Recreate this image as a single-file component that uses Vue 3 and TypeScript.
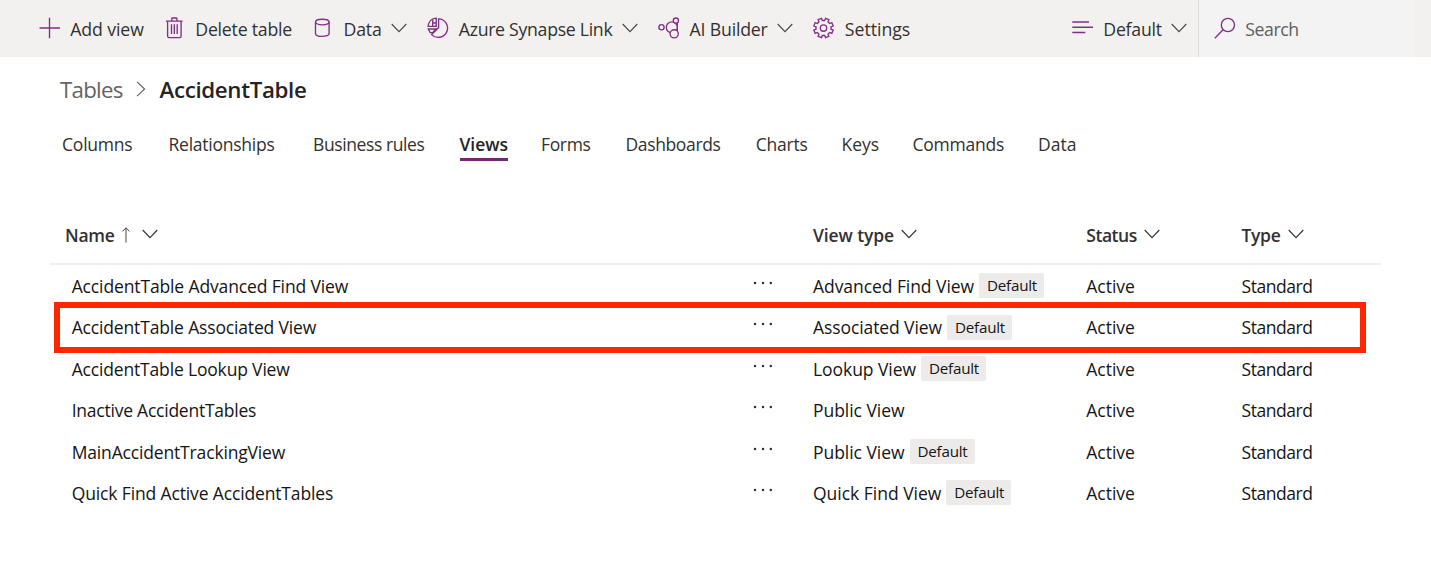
<script setup lang="ts">
import type { Directive } from 'vue'

interface Command {
  icon: string
  label: string
  width: number
  menu?: boolean
}
interface Tab {
  label: string
  width: number
  active?: boolean
}
interface Row {
  name: string
  nameWidth: number
  viewType: string
  typeWidth: number
  isDefault?: boolean
  highlighted?: boolean
}

// Spreads a label's tracking so that it takes exactly the given advance width.
const vFit: Directive<HTMLElement, number> = {
  mounted(el, { value }) {
    const natural = el.getBoundingClientRect().width
    const count = (el.textContent ?? '').length
    if (count > 0) el.style.letterSpacing = `${(value - natural) / count}px`
  },
}

const commands: Command[] = [
  { icon: 'add', label: 'Add view', width: 73.5 },
  { icon: 'trash', label: 'Delete table', width: 96.8 },
  { icon: 'db', label: 'Data', width: 38 },
  { icon: 'pie', label: 'Azure Synapse Link', width: 153.7 },
  { icon: 'ai', label: 'AI Builder', width: 78 },
  { icon: 'gear', label: 'Settings', width: 65.5 },
].map((c) => ({ ...c, menu: ['db', 'pie', 'ai'].includes(c.icon) }))

const tabs: Tab[] = [
  { label: 'Columns', width: 70.5 },
  { label: 'Relationships', width: 106 },
  { label: 'Business rules', width: 111.5 },
  { label: 'Views', width: 48.5, active: true },
  { label: 'Forms', width: 49.5 },
  { label: 'Dashboards', width: 95 },
  { label: 'Charts', width: 52 },
  { label: 'Keys', width: 37.5 },
  { label: 'Commands', width: 91.5 },
  { label: 'Data', width: 38.5 },
]

const rows: Row[] = [
  { name: 'AccidentTable Advanced Find View', nameWidth: 276.5, viewType: 'Advanced Find View', typeWidth: 161, isDefault: true },
  { name: 'AccidentTable Associated View', nameWidth: 244.5, viewType: 'Associated View', typeWidth: 129, isDefault: true },
  { name: 'AccidentTable Lookup View', nameWidth: 218, viewType: 'Lookup View', typeWidth: 103, isDefault: true },
  { name: 'Inactive AccidentTables', nameWidth: 184.5, viewType: 'Public View', typeWidth: 91.5 },
  { name: 'MainAccidentTrackingView', nameWidth: 213.5, viewType: 'Public View', typeWidth: 91.5, isDefault: true },
  { name: 'Quick Find Active AccidentTables', nameWidth: 261.5, viewType: 'Quick Find View', typeWidth: 128.3, isDefault: true },
].map((r, i) => ({ ...r, highlighted: i === 1 }))

// Cog outline: eight teeth, the first pair straddling the vertical axis.
const gearPath = (() => {
  const pts: string[] = []
  for (let i = 0; i < 8; i++) {
    const a = 22.5 + i * 45
    const corners: [number, number][] = [
      [-13.5, 7.6],
      [-10.5, 9.9],
      [10.5, 9.9],
      [13.5, 7.6],
    ]
    for (const [d, r] of corners) {
      const t = ((a + d - 90) * Math.PI) / 180
      pts.push(`${(10.5 + r * Math.cos(t)).toFixed(2)} ${(11 + r * Math.sin(t)).toFixed(2)}`)
    }
  }
  return `M${pts.join('L')}Z`
})()
</script>

<template>
  <div class="page">
    <header class="toolbar">
      <div class="commands">
        <button v-for="c in commands" :key="c.icon" class="command">
          <svg class="icon" viewBox="0 0 22 22">
            <path v-if="c.icon === 'add'" d="M.5 11H21M10.5.8V21.3" />
            <g v-else-if="c.icon === 'trash'">
              <path d="M1.9 4.1H18.6M7.8 4V1.7Q7.8 1 8.5 1H12.2Q12.9 1 12.9 1.7V4M3.6 4.2V19Q3.6 20.6 5.2 20.6H15.5Q17.1 20.6 17.1 19V4.2" />
              <path d="M7.5 7.2V17M10.3 7.2V17M13.2 7.2V17" />
            </g>
            <g v-else-if="c.icon === 'db'">
              <ellipse cx="10.3" cy="5" rx="6.8" ry="2.8" />
              <path d="M3.5 5V16.4C3.5 20.4 17.1 20.4 17.1 16.4V5" />
            </g>
            <g v-else-if="c.icon === 'pie'">
              <path d="M9.2 1.2V9.3H1.1C1.4 5 4.6 1.6 9.2 1.2Z" />
              <path d="M5.7 3V9.2M5.9 6H9" />
              <path d="M9 12H1.3L3.1 15.6H5.6Z" />
              <path d="M11.6 1.8A9.3 9.3 0 1 1 4.6 17.6L11.6 10.6Z" />
            </g>
            <g v-else-if="c.icon === 'ai'">
              <circle cx="3.5" cy="10.2" r="2.6" />
              <path d="M19.3 6V14" />
              <circle cx="13.8" cy="10.4" r="5.5" class="solid" />
              <circle cx="17.9" cy="3.6" r="2.6" class="solid" />
              <circle cx="16.2" cy="16.8" r="4.1" class="solid" />
            </g>
            <g v-else>
              <path :d="gearPath" />
              <circle cx="10.5" cy="11" r="3.2" />
            </g>
          </svg>
          <span class="slot"><span v-fit="c.width">{{ c.label }}</span></span>
          <svg v-if="c.menu" class="chevron" viewBox="0 0 16 10"><path d="M.7 1 8 8.6 15.3 1" /></svg>
        </button>
      </div>
      <button class="command selector">
        <svg class="icon lines" viewBox="0 0 22 22"><path d="M.3 5H17M.3 10.2H21M.3 15.5H13.3" /></svg>
        <span class="slot"><span v-fit="58.5">Default</span></span>
        <svg class="chevron" viewBox="0 0 16 10"><path d="M.7 1 8 8.6 15.3 1" /></svg>
      </button>
      <div class="search">
        <svg class="icon" viewBox="0 0 22 22">
          <circle cx="13.9" cy="8" r="6.6" />
          <path d="M9.1 12.8.8 21.2" />
        </svg>
        <span class="slot"><span v-fit="53.5">Search</span></span>
      </div>
    </header>

    <nav class="breadcrumb">
      <span class="parent"><span v-fit="62.5">Tables</span></span>
      <svg class="crumb-arrow" viewBox="0 0 10 16"><path d="M1 .8 8.6 8 1 15.2" /></svg>
      <span class="current"><span v-fit="147">AccidentTable</span></span>
    </nav>

    <nav class="tabs">
      <div v-for="t in tabs" :key="t.label">
        <span class="tab" :class="{ active: t.active }"><span v-fit="t.width">{{ t.label }}</span></span>
      </div>
    </nav>

    <section class="table">
      <div class="grid head">
        <div class="cell name">
          <span v-fit="49.5">Name</span>
          <svg class="sort" viewBox="0 0 8 16"><path d="M4 15.6V.8M.6 4.4 4 .8 7.4 4.4" /></svg>
          <svg class="chevron" viewBox="0 0 16 10"><path d="M.7 1 8 8.6 15.3 1" /></svg>
        </div>
        <div></div>
        <div class="cell"><span v-fit="81">View type</span><svg class="chevron" viewBox="0 0 16 10"><path d="M.7 1 8 8.6 15.3 1" /></svg></div>
        <div class="cell"><span v-fit="50.5">Status</span><svg class="chevron" viewBox="0 0 16 10"><path d="M.7 1 8 8.6 15.3 1" /></svg></div>
        <div class="cell"><span v-fit="39">Type</span><svg class="chevron" viewBox="0 0 16 10"><path d="M.7 1 8 8.6 15.3 1" /></svg></div>
      </div>
      <div v-for="r in rows" :key="r.name" class="grid row">
        <div class="cell name"><span v-fit="r.nameWidth">{{ r.name }}</span></div>
        <div class="cell">
          <svg class="more" viewBox="0 0 20 4"><circle cx="2" cy="2" r="1.25" /><circle cx="10" cy="2" r="1.25" /><circle cx="17.8" cy="2" r="1.25" /></svg>
        </div>
        <div class="cell">
          <span v-fit="r.typeWidth">{{ r.viewType }}</span>
          <span v-if="r.isDefault" class="badge"><span v-fit="50">Default</span></span>
        </div>
        <div class="cell"><span v-fit="48.5">Active</span></div>
        <div class="cell"><span v-fit="71">Standard</span></div>
        <div v-if="r.highlighted" class="highlight"></div>
      </div>
    </section>
  </div>
</template>

<style>
body {
  margin: 0;
  background: #fff;
}
</style>

<style scoped>
.page {
  height: 588px;
  overflow: hidden;
  background: #fff;
  color: #323130;
  font-family: 'Open Sans', 'Noto Sans', sans-serif;
  font-size: 17.5px;
  white-space: nowrap;
}
svg {
  flex: none;
  display: block;
  fill: none;
}
button {
  padding: 0;
  border: 0;
  background: none;
  color: inherit;
  font: inherit;
}
.toolbar {
  display: flex;
  height: 56.5px;
  background: #f3f1ef;
  font-size: 17.7px;
}
.commands {
  display: flex;
  gap: 20.2px;
  width: 1072px;
  padding-left: 39px;
  box-sizing: border-box;
}
.command,
.search {
  display: flex;
  align-items: center;
}
.icon {
  width: 22px;
  height: 22px;
  margin: -1.5px 9.3px 0 0;
  stroke: #822f85;
  stroke-width: 1.35;
}
.solid {
  fill: #f3f1ef;
}
.slot {
  line-height: 26px;
  padding-top: 0.5px;
}
.chevron {
  width: 16px;
  height: 10px;
  margin: -1px 0 0 9.7px;
  stroke: #484644;
  stroke-width: 1.1;
}
.selector {
  width: 126px;
}
.lines {
  stroke-width: 1.5;
}
.search {
  flex: 1;
  padding-left: 15px;
  margin-right: 16px;
  border-left: 1px solid #dddbd9;
  background: #f3f3f3;
  color: #605e5c;
}
.breadcrumb {
  display: flex;
  align-items: center;
  height: 34px;
  margin-top: 15.5px;
  padding-left: 60px;
  font-size: 22.3px;
}
.parent {
  color: #666462;
}
.crumb-arrow {
  width: 10px;
  height: 16px;
  margin: 0 13.3px 0 13.7px;
  stroke: #605e5c;
  stroke-width: 1.1;
}
.current {
  font-weight: 600;
  color: #252423;
}
.tabs {
  display: grid;
  grid-template-columns: 106.5px 144.5px 146.5px 81.5px 84.5px 130.2px 85.8px 71px 125.5px 40px;
  margin-top: 21.5px;
  padding-left: 62px;
}
.tab {
  display: inline-block;
  box-sizing: border-box;
  height: 33.5px;
  line-height: 33px;
}
.active {
  border-bottom: 3.5px solid #742774;
  font-weight: 600;
  color: #252423;
}
.table {
  width: 1331px;
  margin: 43px 0 0 50px;
}
.grid {
  display: grid;
  grid-template-columns: 703px 60px 273.3px 155.2px 1fr;
}
.cell {
  display: flex;
  align-items: center;
}
.head {
  height: 57px;
  padding-top: 2px;
  border-bottom: 2px solid #efefef;
  font-weight: 600;
}
.head .name {
  padding-left: 15px;
}
.head .chevron {
  margin: -2px 0 0 7.3px;
  stroke: #323130;
}
.head .sort {
  width: 8px;
  height: 16px;
  margin-left: 7.7px;
  stroke: #484644;
  stroke-width: 1;
}
.head .name .chevron {
  margin-left: 12.3px;
}
.row {
  position: relative;
  height: 41.4px;
  top: 0.3px;
  color: #161514;
}
.row .name {
  padding-left: 21.7px;
}
.more {
  width: 20px;
  height: 4px;
  margin: -6px 0 0 -0.5px;
  fill: #323130;
}
.badge {
  width: 57px;
  height: 25px;
  margin-left: 5px;
  padding-left: 8px;
  border-radius: 2px;
  background: #edebe9;
  font-size: 15.2px;
  line-height: 25.5px;
}
.highlight {
  position: absolute;
  left: 4px;
  top: -5px;
  width: 1300px;
  height: 39.5px;
  border: 6px solid #ff2600;
}
</style>
